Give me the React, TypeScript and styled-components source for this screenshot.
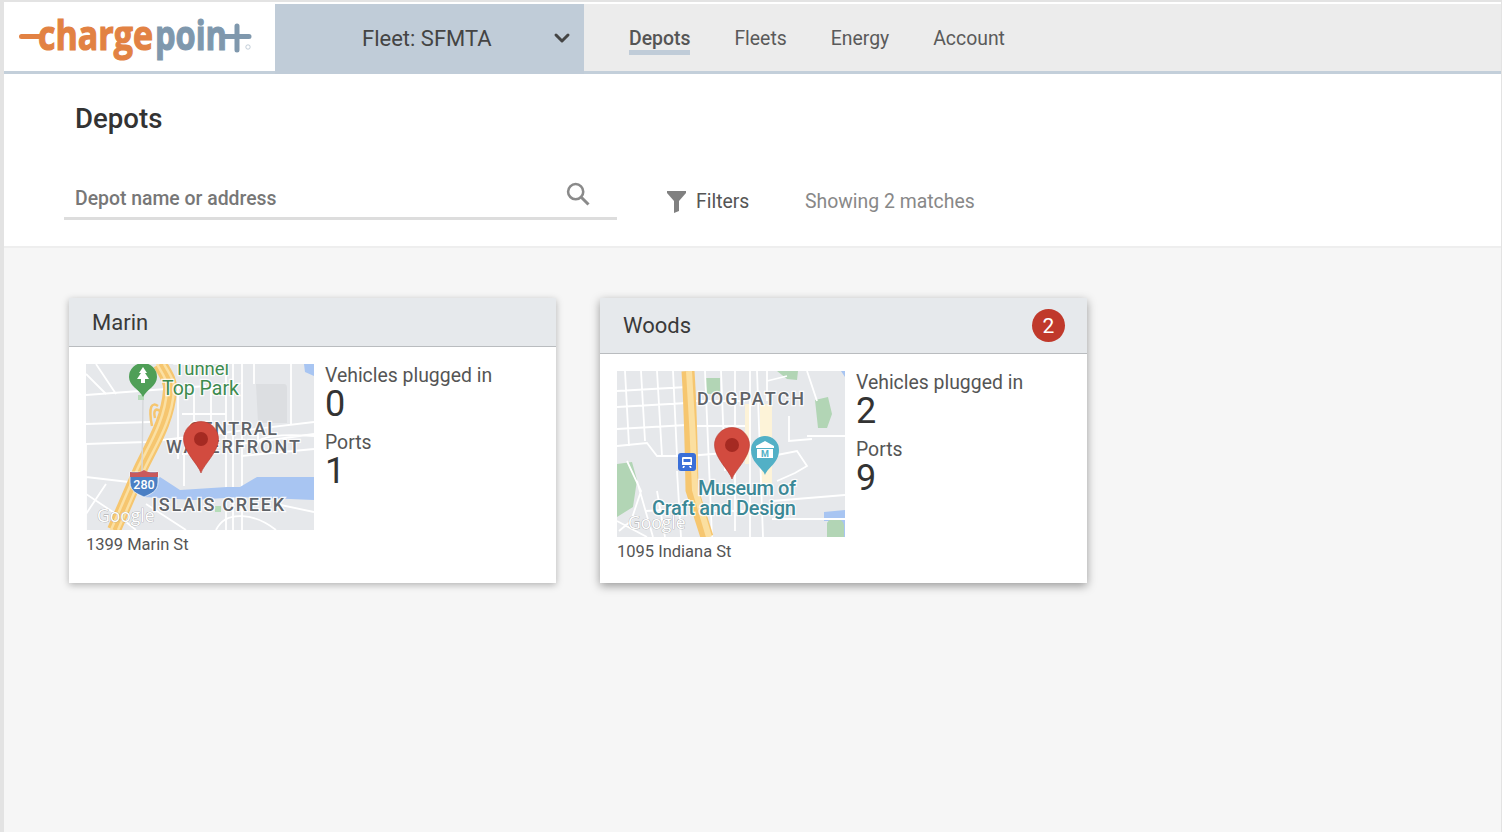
import React from "react";
import styled, { createGlobalStyle } from "styled-components";
import { ChevronDown } from "lucide-react";

const Global = createGlobalStyle`
  html, body { margin: 0; padding: 0; height: 100%; }
  body { font-family: Roboto, "Liberation Sans", sans-serif; background: #f6f6f6; overflow: hidden; }
  #root { height: 100%; }
`;

const Frame = styled.div`
  box-sizing: border-box;
  width: 1502px;
  height: 832px;
  display: flex;
  flex-direction: column;
  border-left: 4px solid #e3e3e3;
  border-right: 1px solid #e3e3e3;
  background: #f6f6f6;
  overflow: hidden;
`;
const TopEdge = styled.div`
  height: 2px;
  background: #fff;
  border-top: 2px solid #e3e3e3;
`;
const Header = styled.header`
  display: flex;
  height: 67px;
  background: #ececec;
  border-bottom: 3px solid #c3cfda;
`;
const LogoCell = styled.div`
  width: 271px;
  background: #fff;
  display: flex;
  align-items: center;
`;
const FleetSelect = styled.div`
  width: 309px;
  height: 70px;
  background: #c0ccd8;
  display: flex;
  align-items: center;
  justify-content: space-between;
  box-sizing: border-box;
  padding: 0 10px 2px 87px;
  font-size: 22px;
  color: #444;
`;
const Nav = styled.nav`
  display: flex;
  gap: 44px;
  padding-left: 45px;
  align-items: flex-start;
`;
const Tab = styled.div<{ $active?: boolean }>`
  box-sizing: border-box;
  margin-top: 20px;
  height: 31px;
  font-size: 19.4px;
  line-height: 29px;
  font-weight: ${(p) => (p.$active ? 500 : 400)};
  color: ${(p) => (p.$active ? "#555" : "#5a5a5a")};
  border-bottom: 5px solid ${(p) => (p.$active ? "#c0ccd8" : "transparent")};
`;
const PageHead = styled.section`
  height: 174px;
  box-sizing: border-box;
  background: #fff;
  border-bottom: 2px solid #eeeeee;
  padding: 27px 0 0 60px;
`;
const Title = styled.h1`
  margin: 0 0 0 11px;
  font-size: 27.6px;
  line-height: 36px;
  font-weight: 500;
  color: #333;
`;
const Controls = styled.div`
  display: flex;
  align-items: flex-start;
  margin: 39px 0 0 0;
`;
const SearchBox = styled.div`
  width: 553px;
  height: 44px;
  box-sizing: border-box;
  margin-right: 50px;
  border-bottom: 3px solid #ddd;
  display: flex;
  align-items: flex-start;
  justify-content: space-between;
  padding: 10px 25px 0 11px;
  font-size: 19.4px;
  line-height: 26px;
  font-weight: 500;
  color: #777;
`;
const SearchIcon = styled.svg`
  width: 28px;
  height: 28px;
  margin-top: -6px;
`;
const FilterBtn = styled.div`
  display: flex;
  align-items: center;
  gap: 10px;
  margin-top: 13px;
  font-size: 19.4px;
  line-height: 26px;
  color: #555;
  width: 138px;
`;
const Matches = styled.div`
  margin-top: 13px;
  font-size: 19.4px;
  line-height: 26px;
  color: #888;
`;
const Cards = styled.main`
  display: flex;
  gap: 44px;
  padding: 50px 0 0 65px;
`;
const Card = styled.article<{ $raised?: boolean }>`
  width: 487px;
  height: 285px;
  background: #fff;
  box-shadow: ${(p) => (p.$raised ? "0 3px 9px rgba(0,0,0,.38)" : "0 2px 7px rgba(0,0,0,.28)")};
  display: flex;
  flex-direction: column;
`;
const CardHead = styled.div<{ $tall?: boolean }>`
  box-sizing: content-box;
  height: ${(p) => (p.$tall ? 55 : 48)}px;
  background: #e6e9ec;
  border-bottom: 1px solid #b9bcbf;
  display: flex;
  align-items: center;
  justify-content: space-between;
  padding: 0 22px 0 23px;
  font-size: 22px;
  color: #3a3a3a;
`;
const Badge = styled.span`
  width: 33px;
  height: 33px;
  border-radius: 50%;
  background: #c0392b;
  color: #fff;
  font-size: 21px;
  display: flex;
  align-items: center;
  justify-content: center;
`;
const CardBody = styled.div`
  display: grid;
  grid-template-columns: 228px auto;
  column-gap: 11px;
  padding: 17px 0 0 17px;
`;
const MapBox = styled.svg`
  width: 228px;
  height: 166px;
  display: block;
`;
const Stats = styled.div`
  display: flex;
  flex-direction: column;
`;
const Label = styled.div`
  font-size: 19.4px;
  line-height: 23px;
  color: #555;
`;
const Value = styled.div`
  font-size: 36px;
  line-height: 32px;
  margin-top: 1px;
  margin-bottom: 11px;
  color: #333;
`;
const Address = styled.div`
  grid-column: 1 / 3;
  margin-top: 5px;
  font-size: 16.5px;
  line-height: 20px;
  color: #555;
`;

const Logo = () => (
  <svg width="271" height="67" viewBox="0 0 271 67">
    <line x1="17.5" y1="32.5" x2="38" y2="32.5" stroke="#e28243" strokeWidth="5" strokeLinecap="round" />
    <text x="34" y="46" fontFamily="'Open Sans', sans-serif" fontWeight="700" fontSize="42" fill="#e28243" stroke="#e28243" strokeWidth="1.2" textLength="115" lengthAdjust="spacingAndGlyphs">charge</text>
    <text x="151" y="46" fontFamily="'Open Sans', sans-serif" fontWeight="700" fontSize="42" fill="#7f98ad" stroke="#7f98ad" strokeWidth="1.2" textLength="72" lengthAdjust="spacingAndGlyphs">poin</text>
    <path d="M221 32.5H245M233 22V46" stroke="#7f98ad" strokeWidth="5" strokeLinecap="round" fill="none" />
    <circle cx="244" cy="43" r="2.2" fill="none" stroke="#b4c2ce" strokeWidth="0.8" />
  </svg>
);

const RedPin = ({ x, y }: { x: number; y: number }) => (
  <g transform={`translate(${x} ${y})`}>
    <path d="M0 34C-3 25-17.5 13-17.5 0A17.5 17.5 0 0 1 17.5 0C17.5 13 3 25 0 34Z" fill="#d24b3f" stroke="#b8392f" strokeWidth="0.6" />
    <circle r="7" fill="#a52a22" />
  </g>
);

const Roads = styled.g`
  stroke: #fff;
  fill: none;
  stroke-width: 1.8;
`;
const Highway = styled.path<{ $w: number; $c: string }>`
  fill: none;
  stroke: ${(p) => p.$c};
  stroke-width: ${(p) => p.$w}px;
`;
const MapLabel = styled.text<{ $c: string; $size: number; $w?: number }>`
  font-family: Roboto, sans-serif;
  font-size: ${(p) => p.$size}px;
  font-weight: ${(p) => p.$w ?? 400};
  fill: ${(p) => p.$c};
  stroke: #fff;
  stroke-width: 2.5px;
  stroke-opacity: 0.85;
  paint-order: stroke;
`;
const GoogleMark = styled.text`
  font-family: "Open Sans", sans-serif;
  font-size: 17.5px;
  fill: #fff;
  stroke: #8c8c8c;
  stroke-width: 0.7px;
  stroke-opacity: 0.8;
  paint-order: stroke;
`;

const MarinMap = () => (
  <MapBox viewBox="0 0 228 166">
    <rect width="228" height="166" fill="#e6e8eb" />
    <path d="M218 0H228V12L219 8Z" fill="#a8c5f2" />
    <path d="M170 20H198Q201 20 201 24V59H172Z" fill="#dcdee1" />
    <Roads>
      <path d="M0 31L120 22M0 80L60 78M60 78L228 58M0 113L60 120M0 60L64 58M0 80V166" />
      <path d="M92 24V95M108 22V68M125 18V75M140 0V166M147 0V166M156 0V166M168 0V20M172 60V80M205 0V60" />
      <path d="M96 50H140M98 68H140M96 90L130 88M155 80L228 70M155 92L228 85M165 85C170 70 200 70 228 72M98 90V122" />
      <path d="M0 130L30 150L50 166M20 120L0 150M10 0L30 30M0 10L20 30M130 166C140 145 170 150 190 166M60 140L100 166M190 140L228 148" />
    </Roads>
    <path d="M58 126L74 113L94 126L141 123L154 123L171 113H228V136L154 133L108 136L58 133Z" fill="#a8c5f2" />
    <Highway d="M28 166L54 106C64 84 82 58 84 26C85 16 78 8 74 0" $w={14} $c="#f6c66f" />
    <Highway d="M25 166L51 106C61 84 79 58 81 26C82 16 75 8 71 0" $w={2.5} $c="#fbe0a3" />
    <Highway d="M32 166L58 106C68 84 86 58 88 26C89 16 82 8 78 0" $w={2.5} $c="#fbe0a3" />
    <path d="M66 62C62 42 66 38 72 42M69 54C67 46 70 44 74 47" stroke="#f6c66f" strokeWidth="2.5" fill="none" />
    <path d="M57 33L56 108" stroke="#d5d7da" strokeWidth="1.4" />
    <rect x="52" y="31" width="6" height="5" fill="#b5dcb8" />
    <rect x="129" y="142" width="6" height="6" fill="#b5dcb8" />
    <g transform="translate(44 106)">
      <path d="M0 2H28V12C28 22 20 24 14 27C8 24 0 22 0 12Z" fill="#4a7fc4" stroke="#fff" strokeWidth="0.7" />
      <path d="M0 2C5 3 9 3 14 0C19 3 23 3 28 2V7H0Z" fill="#c9595c" />
      <text x="14" y="18.5" textAnchor="middle" fontFamily="Roboto, sans-serif" fontWeight="500" fontSize="12.5" fill="#fff">280</text>
    </g>
    <path d="M57 33C53 25 43 22 43 13A14 14 0 0 1 71 13C71 22 61 25 57 33Z" fill="#4f9f57" />
    <path d="M57 3L61 9H59L63 15H59V19H55V15H51L55 9H53Z" fill="#fff" />
    <MapLabel x="88" y="11" $c="#3d8b4f" $size={18.5}>Tunnel</MapLabel>
    <MapLabel x="76" y="31" $c="#3d8b4f" $size={19.5}>Top Park</MapLabel>
    <MapLabel x="103" y="71" $c="#5f6368" $size={18} $w={500} textLength="88">CENTRAL</MapLabel>
    <MapLabel x="80" y="89" $c="#5f6368" $size={18} $w={500} textLength="134">WATERFRONT</MapLabel>
    <MapLabel x="66" y="147" $c="#5f6368" $size={18} $w={500} textLength="132">ISLAIS CREEK</MapLabel>
    <GoogleMark x="11" y="158">Google</GoogleMark>
    <RedPin x={115} y={75} />
  </MapBox>
);

const WoodsMap = () => (
  <MapBox viewBox="0 0 228 166">
    <rect width="228" height="166" fill="#e6e8eb" />
    <path d="M88 7H103V23H90ZM160 0H181L180 9L170 8ZM198 29L211 26L215 43L210 57H201ZM0 93L15 91L20 109L16 136L0 146Z" fill="#b2d5b5" />
    <path d="M224 0H228V6ZM207 141L228 139V166H222L220 150H207Z" fill="#a8c5f2" />
    <path d="M210 152A9 8 0 0 1 227 154V166H210Z" fill="#b2d5b5" />
    <path d="M128 33H134V93H128ZM143 33H155V116H143Z" fill="#fdf3d8" />
    <Roads>
      <path d="M8 0L12 75M24 0L28 70M40 0L45 85M56 0L60 85M88 0L95 166M104 0L108 100M118 0V160M133 0V166M140 0L146 166M150 0V30M0 20L70 16M0 36L70 32M0 58L70 54M0 75L30 72L40 85L70 85L135 80" />
      <path d="M75 30H128M75 55H128M155 85L180 80L190 95L178 102L160 110M155 130L228 124M60 100L64 166M40 120L48 166M0 150L30 166M20 110L36 166M172 45V70L195 68M190 65H228M150 10L170 5M190 0L200 30M28 140L70 138M95 140H133M155 148H228M10 90L24 120L14 150L2 160" />
    </Roads>
    <Highway d="M71 0C73 30 74 60 75 119L90 166" $w={13} $c="#f6c66f" />
    <Highway d="M72 0C74 30 76 60 78 119L92 166" $w={6} $c="#fbdfa0" />
    <g transform="translate(61 82)">
      <rect width="18" height="18" rx="3" fill="#3a6fd8" />
      <path d="M5 4H13A1 1 0 0 1 14 5V12H4V5A1 1 0 0 1 5 4ZM5 13H7L6 15H4.5ZM11 13H13L13.5 15H12Z" fill="#fff" />
      <path d="M5.5 6H12.5V9H5.5Z" fill="#3a6fd8" />
    </g>
    <MapLabel x="80" y="34" $c="#5f6368" $size={18} $w={500} textLength="107">DOGPATCH</MapLabel>
    <path d="M148 104C145 96 134 92 134 79A14 14 0 0 1 162 79C162 92 151 96 148 104Z" fill="#52b0c6" />
    <path d="M148 70L157 75V77H139V75ZM140 78H156V87H140Z" fill="#fff" />
    <text x="148" y="86" textAnchor="middle" fontFamily="Roboto, sans-serif" fontWeight="700" fontSize="9" fill="#52b0c6">M</text>
    <MapLabel x="81" y="124" $c="#3b8896" $size={20} $w={500} textLength="98">Museum of</MapLabel>
    <MapLabel x="35" y="144" $c="#3b8896" $size={20} $w={500} textLength="144">Craft and Design</MapLabel>
    <GoogleMark x="11" y="158">Google</GoogleMark>
    <RedPin x={115} y={74} />
  </MapBox>
);

const depots = [
  { name: "Marin", address: "1399 Marin St", plugged: 0, ports: 1, badge: 0, Map: MarinMap },
  { name: "Woods", address: "1095 Indiana St", plugged: 2, ports: 9, badge: 2, Map: WoodsMap },
];

export default function App() {
  return (
    <>
      <Global />
      <Frame>
        <TopEdge />
        <Header>
          <LogoCell><Logo /></LogoCell>
          <FleetSelect>
            <span>Fleet: SFMTA</span>
            <ChevronDown size={24} strokeWidth={3} color="#444" />
          </FleetSelect>
          <Nav>
            <Tab $active>Depots</Tab>
            <Tab>Fleets</Tab>
            <Tab>Energy</Tab>
            <Tab>Account</Tab>
          </Nav>
        </Header>
        <PageHead>
          <Title>Depots</Title>
          <Controls>
            <SearchBox>
              <span>Depot name or address</span>
              <SearchIcon viewBox="0 0 24 24">
                <circle cx="10" cy="10" r="6.5" fill="none" stroke="#8a8a8a" strokeWidth="2.2" />
                <path d="M15 15L21 21" stroke="#8a8a8a" strokeWidth="2.6" />
              </SearchIcon>
            </SearchBox>
            <FilterBtn>
              <svg width="19" height="22" viewBox="0 0 19 22">
                <path d="M0 0H19V2L12 10V20L7 22V10L0 2Z" fill="#808080" />
              </svg>
              <span>Filters</span>
            </FilterBtn>
            <Matches>Showing 2 matches</Matches>
          </Controls>
        </PageHead>
        <Cards>
          {depots.map(({ name, address, plugged, ports, badge, Map }) => (
            <Card key={name} $raised={badge > 0}>
              <CardHead $tall={badge > 0}>
                <span>{name}</span>
                {badge > 0 && <Badge>{badge}</Badge>}
              </CardHead>
              <CardBody>
                <Map />
                <Stats>
                  <Label>Vehicles plugged in</Label>
                  <Value>{plugged}</Value>
                  <Label>Ports</Label>
                  <Value>{ports}</Value>
                </Stats>
                <Address>{address}</Address>
              </CardBody>
            </Card>
          ))}
        </Cards>
      </Frame>
    </>
  );
}
